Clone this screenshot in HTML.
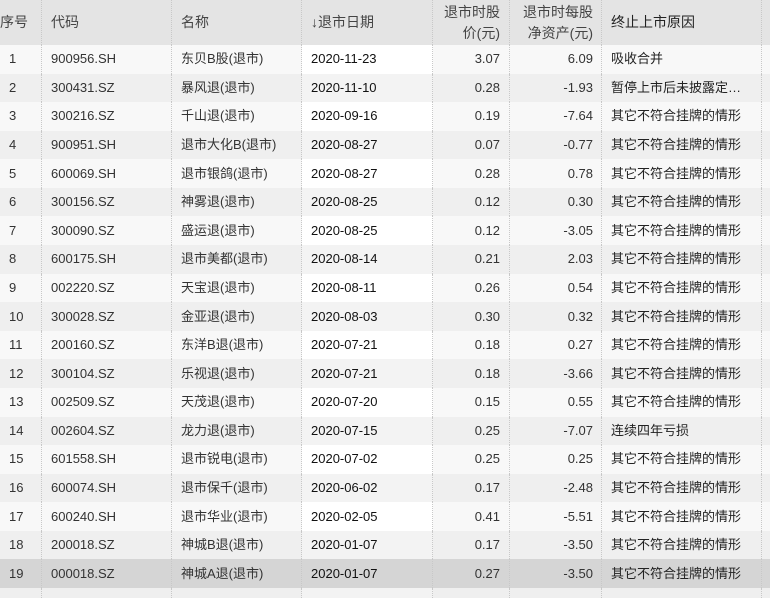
<!DOCTYPE html>
<html><head><meta charset="utf-8"><style>
*{margin:0;padding:0;box-sizing:border-box}
body{width:770px;height:593px;overflow:hidden;background:#f5f5f5;font-family:"Liberation Sans","Noto Sans CJK SC",sans-serif;font-size:13px;color:#333}
.r{position:absolute;left:0;width:770px;display:flex}
.c{height:100%;display:flex;align-items:center;white-space:nowrap;overflow:hidden;border-right:1px dotted #c8c8c8;line-height:16px}
.c1{width:42px;padding-left:9px}
.c2{width:130px;padding-left:9px}
.c3{width:130px;padding-left:9px}
.c4{width:131px;padding-left:9px;color:#111}
.c5{width:77px;justify-content:flex-end;padding-right:9px}
.c6{width:92px;justify-content:flex-end;padding-right:8px}
.c7{width:160px;padding-left:9px;color:#222}
.c8{width:8px;border-right:none}
.h{top:0;height:45px;background:#e4e4e4;color:#444;font-size:14px}
.h .c{line-height:21px}
.o{background:#f8f8f8}.o .c4{background:#fff}
.e{background:#efefef}.e .c4{background:#f3f3f3}
.hv{background:#d5d5d5}.hv .c4{background:#d5d5d5}
</style></head><body>
<div class="r h"><div class="c c1" style="padding-left:0">序号</div><div class="c c2">代码</div><div class="c c3">名称</div><div class="c c4" style="color:#444">↓退市日期</div><div class="c c5" style="text-align:right">退市时股<br>价(元)</div><div class="c c6" style="text-align:right">退市时每股<br>净资产(元)</div><div class="c c7">终止上市原因</div><div class="c c8"></div></div>
<div id="t"></div>
<script>
var d=[["900956.SH","东贝B股(退市)","2020-11-23","3.07","6.09","吸收合并"],
["300431.SZ","暴风退(退市)","2020-11-10","0.28","-1.93","暂停上市后未披露定…"],
["300216.SZ","千山退(退市)","2020-09-16","0.19","-7.64",""],
["900951.SH","退市大化B(退市)","2020-08-27","0.07","-0.77",""],
["600069.SH","退市银鸽(退市)","2020-08-27","0.28","0.78",""],
["300156.SZ","神雾退(退市)","2020-08-25","0.12","0.30",""],
["300090.SZ","盛运退(退市)","2020-08-25","0.12","-3.05",""],
["600175.SH","退市美都(退市)","2020-08-14","0.21","2.03",""],
["002220.SZ","天宝退(退市)","2020-08-11","0.26","0.54",""],
["300028.SZ","金亚退(退市)","2020-08-03","0.30","0.32",""],
["200160.SZ","东洋B退(退市)","2020-07-21","0.18","0.27",""],
["300104.SZ","乐视退(退市)","2020-07-21","0.18","-3.66",""],
["002509.SZ","天茂退(退市)","2020-07-20","0.15","0.55",""],
["002604.SZ","龙力退(退市)","2020-07-15","0.25","-7.07","连续四年亏损"],
["601558.SH","退市锐电(退市)","2020-07-02","0.25","0.25",""],
["600074.SH","退市保千(退市)","2020-06-02","0.17","-2.48",""],
["600240.SH","退市华业(退市)","2020-02-05","0.41","-5.51",""],
["200018.SZ","神城B退(退市)","2020-01-07","0.17","-3.50",""],
["000018.SZ","神城A退(退市)","2020-01-07","0.27","-3.50",""]];
var h="",H=28.58;
d.forEach(function(x,i){var cl=i==18?"hv":(i%2?"e":"o");
h+='<div class="r '+cl+'" style="top:'+(45+i*H)+'px;height:'+H+'px"><div class="c c1">'+(i+1)+'</div><div class="c c2">'+x[0]+'</div><div class="c c3">'+x[1]+'</div><div class="c c4">'+x[2]+'</div><div class="c c5">'+x[3]+'</div><div class="c c6">'+x[4]+'</div><div class="c c7">'+(x[5]||"其它不符合挂牌的情形")+'</div><div class="c c8"></div></div>';});
h+='<div class="r e" style="top:'+(45+19*H)+'px;height:10px"><div class="c c1"></div><div class="c c2"></div><div class="c c3"></div><div class="c c4"></div><div class="c c5"></div><div class="c c6"></div><div class="c c7"></div><div class="c c8"></div></div>';
document.getElementById("t").innerHTML=h;
</script>
</body></html>
